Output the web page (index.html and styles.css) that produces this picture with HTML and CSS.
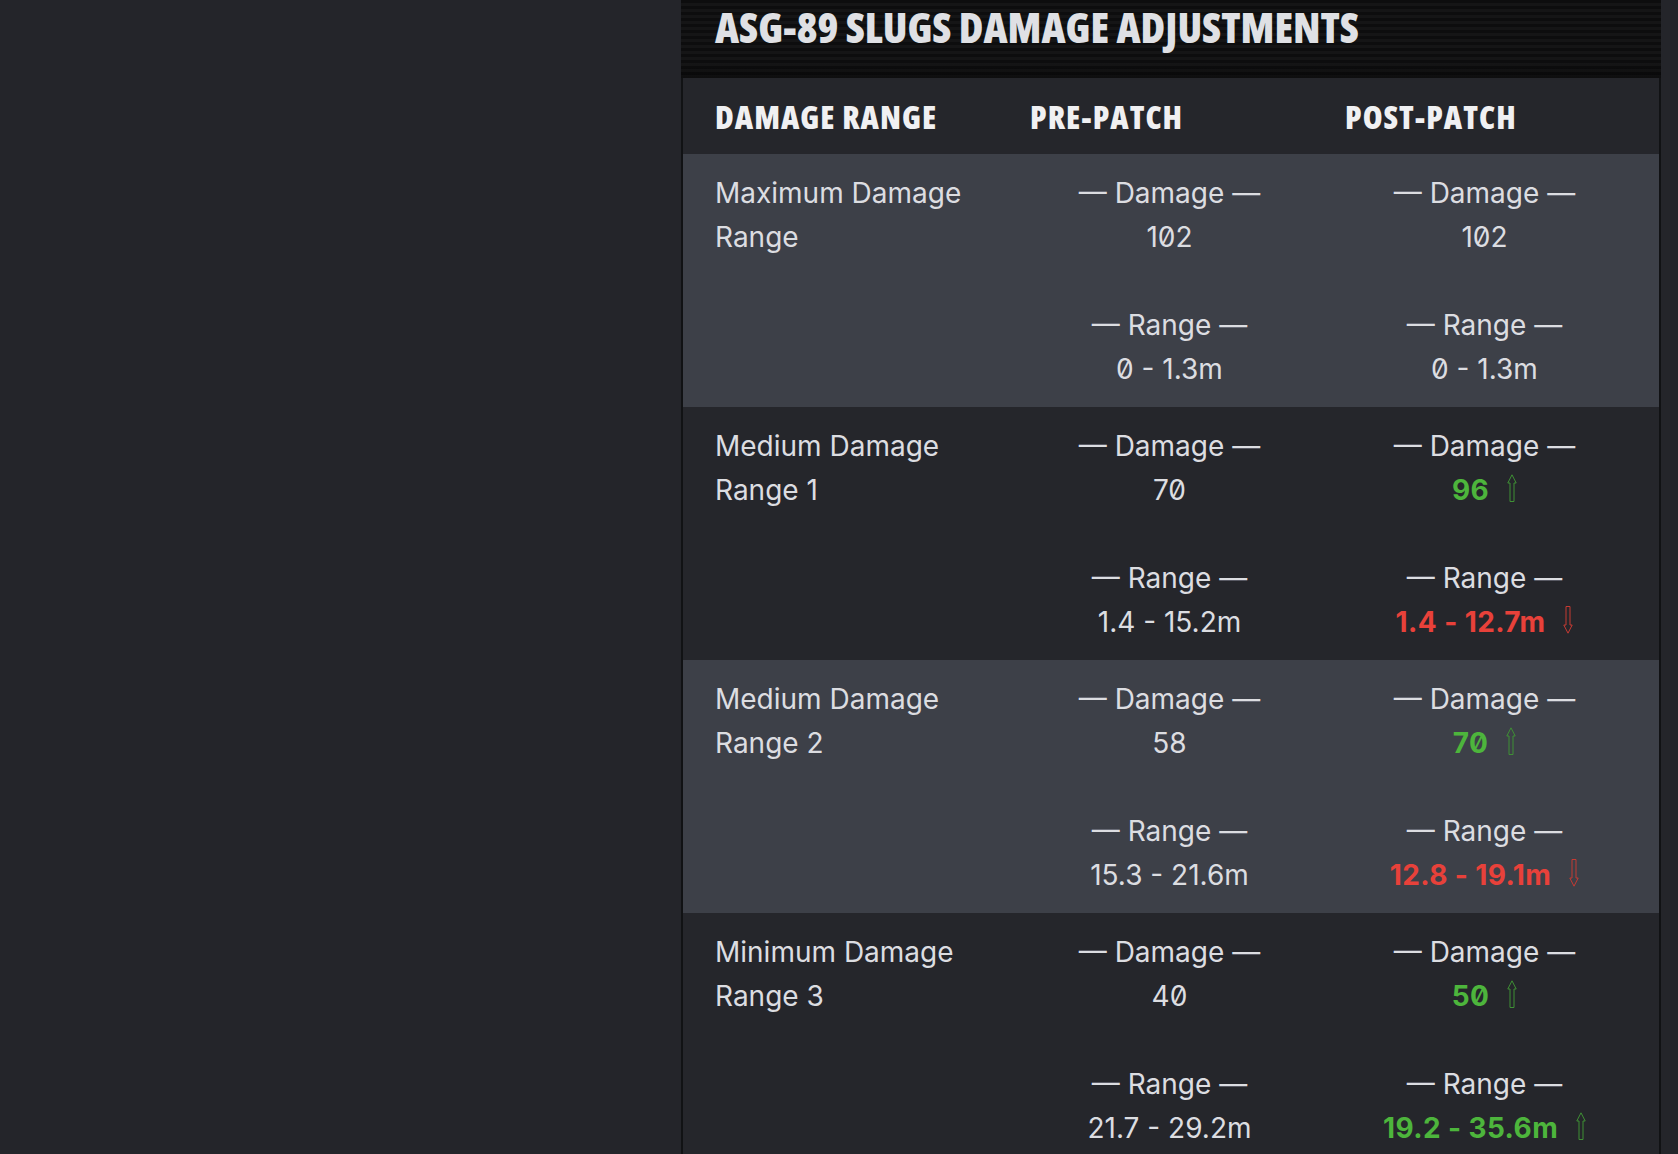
FILE: index.html
```html
<!DOCTYPE html>
<html lang="en">
<head>
<meta charset="utf-8">
<title>ASG-89 Slugs Damage Adjustments</title>
<link rel="stylesheet" href="styles.css">
</head>
<body>
<div class="page">
  <aside class="side"></aside>
  <section class="panel">
    <header class="title-bar">
      <h2 class="title">ASG-89 SLUGS DAMAGE ADJUSTMENTS</h2>
    </header>
    <div class="table">
      <div class="row head">
        <div class="th">DAMAGE RANGE</div>
        <div class="th">PRE-PATCH</div>
        <div class="th">POST-PATCH</div>
      </div>

      <div class="row alt">
        <div class="name">Maximum Damage Range</div>
        <div class="cell">
          <p class="lbl">— Damage —</p>
          <p class="val">102</p>
          <p class="lbl gap">— Range —</p>
          <p class="val">0 - 1.3m</p>
        </div>
        <div class="cell">
          <p class="lbl">— Damage —</p>
          <p class="val">102</p>
          <p class="lbl gap">— Range —</p>
          <p class="val">0 - 1.3m</p>
        </div>
      </div>

      <div class="row">
        <div class="name">Medium Damage Range 1</div>
        <div class="cell">
          <p class="lbl">— Damage —</p>
          <p class="val">70</p>
          <p class="lbl gap">— Range —</p>
          <p class="val">1.4 - 15.2m</p>
        </div>
        <div class="cell">
          <p class="lbl">— Damage —</p>
          <p class="val up">96<svg class="arrow" width="10" height="28" viewBox="0 0 10 28"><path d="M3 27.5V9H0.8L5 0.8L9.2 9H7V27.5Z"/></svg></p>
          <p class="lbl gap">— Range —</p>
          <p class="val down">1.4 - 12.7m<svg class="arrow" width="10" height="28" viewBox="0 0 10 28"><path d="M3 0.5V19H0.8L5 27.2L9.2 19H7V0.5Z"/></svg></p>
        </div>
      </div>

      <div class="row alt">
        <div class="name">Medium Damage Range 2</div>
        <div class="cell">
          <p class="lbl">— Damage —</p>
          <p class="val">58</p>
          <p class="lbl gap">— Range —</p>
          <p class="val">15.3 - 21.6m</p>
        </div>
        <div class="cell">
          <p class="lbl">— Damage —</p>
          <p class="val up">70<svg class="arrow" width="10" height="28" viewBox="0 0 10 28"><path d="M3 27.5V9H0.8L5 0.8L9.2 9H7V27.5Z"/></svg></p>
          <p class="lbl gap">— Range —</p>
          <p class="val down">12.8 - 19.1m<svg class="arrow" width="10" height="28" viewBox="0 0 10 28"><path d="M3 0.5V19H0.8L5 27.2L9.2 19H7V0.5Z"/></svg></p>
        </div>
      </div>

      <div class="row">
        <div class="name">Minimum Damage Range 3</div>
        <div class="cell">
          <p class="lbl">— Damage —</p>
          <p class="val">40</p>
          <p class="lbl gap">— Range —</p>
          <p class="val">21.7 - 29.2m</p>
        </div>
        <div class="cell">
          <p class="lbl">— Damage —</p>
          <p class="val up">50<svg class="arrow" width="10" height="28" viewBox="0 0 10 28"><path d="M3 27.5V9H0.8L5 0.8L9.2 9H7V27.5Z"/></svg></p>
          <p class="lbl gap">— Range —</p>
          <p class="val up">19.2 - 35.6m<svg class="arrow" width="10" height="28" viewBox="0 0 10 28"><path d="M3 27.5V9H0.8L5 0.8L9.2 9H7V27.5Z"/></svg></p>
        </div>
      </div>
    </div>
  </section>
</div>
</body>
</html>
```

FILE: styles.css
```css
html, body {
  margin: 0;
  padding: 0;
  background: #24252a;
  height: 100%;
  overflow: hidden;
}

.page {
  display: flex;
  align-items: flex-start;
  min-height: 100%;
}

.side {
  flex: 0 0 681px;
}

.panel {
  flex: 0 0 980px;
  display: flex;
  flex-direction: column;
}

.title-bar {
  height: 78px;
  box-sizing: border-box;
  padding: 6px 0 0 34px;
  background:
    linear-gradient(to bottom, rgba(0,0,0,0) 80%, rgba(0,0,0,0.35) 100%),
    repeating-linear-gradient(to bottom, #0d0d0e 0px, #0d0d0e 3px, #151516 3px, #151516 6px);
}

.title {
  margin: 0;
  font-family: "Open Sans", "Roboto", sans-serif;
  font-stretch: 75%;
  font-weight: 800;
  font-size: 42px;
  line-height: 42px;
  color: #dfe0e4;
  letter-spacing: 0;
}

.table {
  border-left: 2px solid #111214;
  border-right: 2px solid #111214;
  font-family: "Inter", "Roboto", sans-serif;
  font-variant-numeric: slashed-zero;
  font-feature-settings: "zero" 1;
  color: #dcdde1;
}

.row {
  display: grid;
  grid-template-columns: 315px 315px 315px;
  background: #25262b;
  padding: 17px 0 16px;
}

.row.alt {
  background: #3d4048;
}

.row.head {
  padding: 0;
  height: 76px;
  align-items: center;
}

.th {
  padding-left: 32px;
  font-family: "Open Sans", "Roboto", sans-serif;
  font-stretch: 75%;
  font-weight: 800;
  font-size: 32px;
  letter-spacing: 1px;
  color: #f0f0f2;
}

.name {
  padding-left: 32px;
  padding-right: 8px;
  font-size: 28px;
  line-height: 44px;
}

.cell {
  padding: 0 4px 0 32px;
  text-align: center;
  font-size: 28px;
  line-height: 44px;
}

.cell p {
  margin: 0;
}

.cell .gap {
  margin-top: 44px;
}

.val.up,
.val.down {
  font-weight: 700;
  letter-spacing: 0.4px;
}

.val.up {
  color: #4db53c;
}

.val.down {
  color: #e8413a;
}

.arrow {
  margin-left: 18px;
  vertical-align: -2px;
}

.arrow path {
  fill: none;
  stroke-width: 1;
}

.up .arrow path {
  stroke: #3f8f35;
}

.down .arrow path {
  stroke: #c53a33;
}
```
